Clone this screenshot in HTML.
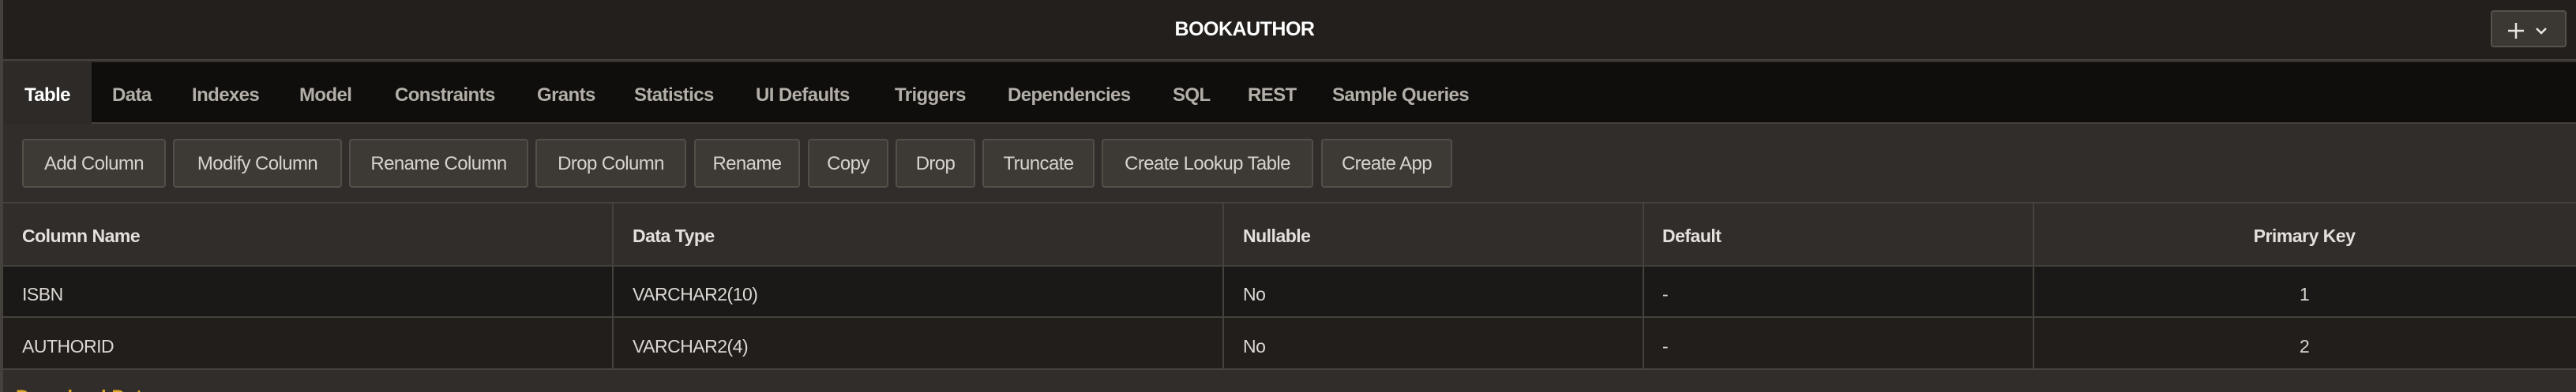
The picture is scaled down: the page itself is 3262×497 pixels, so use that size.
<!DOCTYPE html>
<html style="width:3262px;height:497px;overflow:hidden"><head><meta charset="utf-8"><style>
*{margin:0;padding:0;box-sizing:border-box}
html,body{width:3262px;height:497px;overflow:hidden}
body{background:#312d2a;font-family:"Liberation Sans",sans-serif;position:relative}
.abs{position:absolute}
#hdr{left:0;top:0;width:3262px;height:77px;background:#231f1c;border-bottom:2px solid #45413c}
#title{top:23px;left:1483px;width:186px;text-align:center;color:#fff;font-weight:bold;font-size:25px;letter-spacing:-0.5px}
#plus{left:3154px;top:13px;width:96px;height:47px;background:#3b3834;border:2px solid #55514b;border-radius:4px}
#tabs{left:0;top:79px;width:3262px;height:78px;background:#0f0e0c;border-bottom:2px solid #45413c}
#act{left:4px;top:79px;width:112px;height:78px;background:#2d2a27}
.tab{top:107px;color:#b3aea8;font-weight:bold;font-size:24px;letter-spacing:-0.6px;white-space:nowrap}
.btn{top:176px;height:62px;background:#3d3a36;border:2px solid #524e48;border-radius:4px;color:#d6d2cc;font-size:24px;letter-spacing:-0.6px;text-align:center;line-height:60px;white-space:nowrap}
#tblh{left:0;top:256px;width:3262px;height:82px;background:#312d2a;border-top:2px solid #45413c;border-bottom:2px solid #45413c}
#r1{left:0;top:338px;width:3262px;height:65px;background:#1b1917;border-bottom:2px solid #45413c}
#r2{left:0;top:403px;width:3262px;height:66px;background:#221e1b;border-bottom:2px solid #45413c}
.vl{top:256px;width:2px;height:213px;background:#45413c}
.th{top:286px;color:#e4e0db;font-weight:bold;font-size:23px;letter-spacing:-0.5px;white-space:nowrap}
.td{color:#dcd8d3;font-size:23px;letter-spacing:-0.5px;white-space:nowrap}
#lstrip{left:0;top:0;width:4px;height:497px;background:#45413c}
</style></head><body>
<div id="hdr" class="abs"></div>
<div id="title" class="abs">BOOKAUTHOR</div>
<div id="plus" class="abs"><svg width="92" height="43" style="position:absolute;left:0;top:0"><path d="M30 14V34M20 24H40" stroke="#e8e4df" stroke-width="2.5" fill="none"/><path d="M56 21L62 27L68 21" stroke="#e8e4df" stroke-width="2.5" fill="none"/></svg></div>
<div id="tabs" class="abs"></div>
<div id="act" class="abs"></div>
<div class="abs tab" style="left:31px;color:#fff">Table</div>
<div class="abs tab" style="left:142px">Data</div>
<div class="abs tab" style="left:243px">Indexes</div>
<div class="abs tab" style="left:379px">Model</div>
<div class="abs tab" style="left:500px">Constraints</div>
<div class="abs tab" style="left:680px">Grants</div>
<div class="abs tab" style="left:803px">Statistics</div>
<div class="abs tab" style="left:957px">UI Defaults</div>
<div class="abs tab" style="left:1133px">Triggers</div>
<div class="abs tab" style="left:1276px">Dependencies</div>
<div class="abs tab" style="left:1485px">SQL</div>
<div class="abs tab" style="left:1580px">REST</div>
<div class="abs tab" style="left:1687px">Sample Queries</div>

<div class="abs btn" style="left:28px;width:182px">Add Column</div>
<div class="abs btn" style="left:219px;width:214px">Modify Column</div>
<div class="abs btn" style="left:442px;width:227px">Rename Column</div>
<div class="abs btn" style="left:678px;width:191px">Drop Column</div>
<div class="abs btn" style="left:879px;width:134px">Rename</div>
<div class="abs btn" style="left:1023px;width:102px">Copy</div>
<div class="abs btn" style="left:1134px;width:101px">Drop</div>
<div class="abs btn" style="left:1244px;width:142px">Truncate</div>
<div class="abs btn" style="left:1395px;width:268px">Create Lookup Table</div>
<div class="abs btn" style="left:1673px;width:166px">Create App</div>

<div id="tblh" class="abs"></div>
<div id="r1" class="abs"></div>
<div id="r2" class="abs"></div>
<div class="abs vl" style="left:775px"></div>
<div class="abs vl" style="left:1548px"></div>
<div class="abs vl" style="left:2080px"></div>
<div class="abs vl" style="left:2574px"></div>

<div class="abs th" style="left:28px">Column Name</div>
<div class="abs th" style="left:801px">Data Type</div>
<div class="abs th" style="left:1574px">Nullable</div>
<div class="abs th" style="left:2105px">Default</div>
<div class="abs th" style="left:2574px;width:688px;text-align:center">Primary Key</div>

<div class="abs td" style="left:28px;top:360px">ISBN</div>
<div class="abs td" style="left:801px;top:360px">VARCHAR2(10)</div>
<div class="abs td" style="left:1574px;top:360px">No</div>
<div class="abs td" style="left:2105px;top:360px">-</div>
<div class="abs td" style="left:2574px;width:688px;text-align:center;top:360px">1</div>

<div class="abs td" style="left:28px;top:426px">AUTHORID</div>
<div class="abs td" style="left:801px;top:426px">VARCHAR2(4)</div>
<div class="abs td" style="left:1574px;top:426px">No</div>
<div class="abs td" style="left:2105px;top:426px">-</div>
<div class="abs td" style="left:2574px;width:688px;text-align:center;top:426px">2</div>

<div class="abs" style="left:20px;top:494px;width:300px;height:3px;overflow:hidden"><div style="position:absolute;left:0;top:-5px;line-height:30px;color:#e0a92c;font-size:24px;font-weight:bold;white-space:nowrap">Download Data</div></div>
<div id="lstrip" class="abs"></div>
</body></html>
